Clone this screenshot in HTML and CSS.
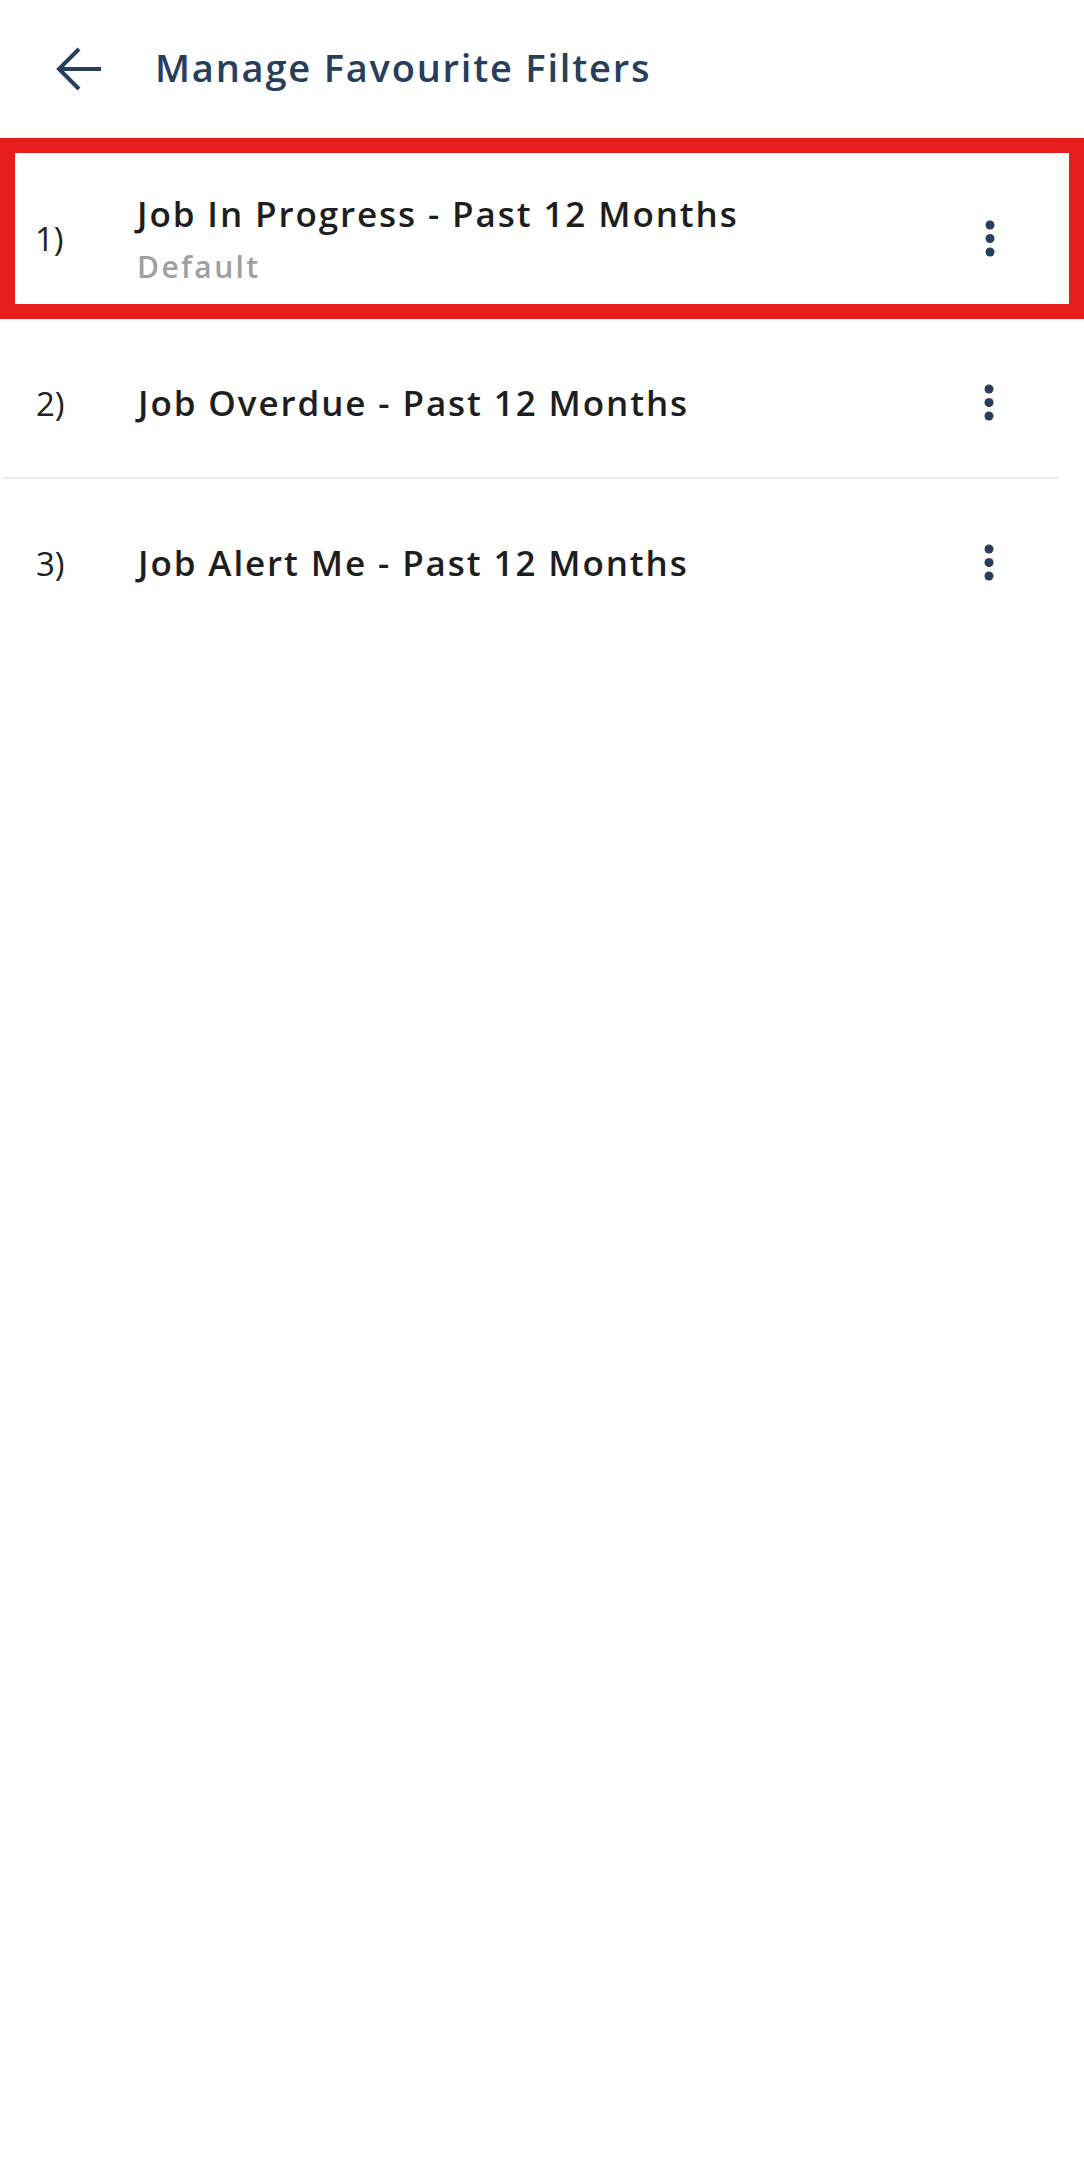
FILE: index.html
```html
<!DOCTYPE html>
<html lang="en">
<head>
<meta charset="utf-8">
<title>Manage Favourite Filters</title>
<link rel="stylesheet" href="styles.css">
</head>
<body>
<header class="header">
  <span class="back">
    <svg width="48" height="48" viewBox="0 0 48 48" aria-hidden="true">
      <path d="M4 24H46" fill="none" stroke="#283e5d" stroke-width="4"/>
      <path d="M24 4L4 24L24 44" fill="none" stroke="#283e5d" stroke-width="4" stroke-linejoin="miter"/>
    </svg>
  </span>
  <h1 class="title">Manage Favourite Filters</h1>
</header>

<main class="list">
  <div class="row row-highlight">
    <span class="num">1)</span>
    <div class="info">
      <div class="name">Job In Progress - Past 12 Months</div>
      <div class="sub">Default</div>
    </div>
    <span class="more">
      <svg width="10" height="38" viewBox="0 0 10 38" aria-hidden="true">
        <circle cx="5" cy="5" r="4.5" fill="#283e5d"/>
        <circle cx="5" cy="18.5" r="4.5" fill="#283e5d"/>
        <circle cx="5" cy="32" r="4.5" fill="#283e5d"/>
      </svg>
    </span>
  </div>

  <div class="row">
    <span class="num">2)</span>
    <div class="info">
      <div class="name">Job Overdue - Past 12 Months</div>
    </div>
    <span class="more">
      <svg width="10" height="38" viewBox="0 0 10 38" aria-hidden="true">
        <circle cx="5" cy="5" r="4.5" fill="#283e5d"/>
        <circle cx="5" cy="18.5" r="4.5" fill="#283e5d"/>
        <circle cx="5" cy="32" r="4.5" fill="#283e5d"/>
      </svg>
    </span>
  </div>
  <div class="divider"></div>

  <div class="row">
    <span class="num">3)</span>
    <div class="info">
      <div class="name">Job Alert Me - Past 12 Months</div>
    </div>
    <span class="more">
      <svg width="10" height="38" viewBox="0 0 10 38" aria-hidden="true">
        <circle cx="5" cy="5" r="4.5" fill="#283e5d"/>
        <circle cx="5" cy="18.5" r="4.5" fill="#283e5d"/>
        <circle cx="5" cy="32" r="4.5" fill="#283e5d"/>
      </svg>
    </span>
  </div>
</main>
</body>
</html>
```

FILE: styles.css
```css
html, body {
  margin: 0;
  padding: 0;
  background: #ffffff;
}

body {
  font-family: "Open Sans", "Noto Sans", Arial, sans-serif;
  color: #1e1e1e;
}

.header {
  display: flex;
  align-items: center;
  height: 138px;
  box-sizing: border-box;
  padding-left: 55px;
}

.back {
  display: flex;
  width: 48px;
  height: 48px;
}

.title {
  margin: -2px 0 0 52px;
  font-size: 38px;
  font-weight: 600;
  color: #283e5d;
  line-height: 1.2;
  letter-spacing: 1.8px;
}

.list {
  display: flex;
  flex-direction: column;
}

.row {
  display: flex;
  align-items: center;
  height: 158px;
  box-sizing: border-box;
  padding: 10px 71px 0 36px;
}

.row-highlight {
  height: 181px;
  border: 15px solid #e61e1e;
  padding: 20px 55px 0 20px;
}

.num {
  width: 102px;
  flex: none;
  font-size: 33px;
  font-weight: 400;
  color: #222222;
}

.info {
  flex: 1;
  min-width: 0;
}

.name {
  font-size: 35px;
  font-weight: 600;
  line-height: 44px;
  color: #1e1e1e;
  letter-spacing: 1.9px;
}

.sub {
  margin-top: 13px;
  font-size: 30px;
  font-weight: 600;
  line-height: 36px;
  color: #a0a0a0;
  letter-spacing: 2.4px;
}

.more {
  width: 48px;
  flex: none;
  display: flex;
  justify-content: center;
}

.divider {
  height: 2px;
  background: #ececec;
  margin: 0 25px 0 2px;
}
```
